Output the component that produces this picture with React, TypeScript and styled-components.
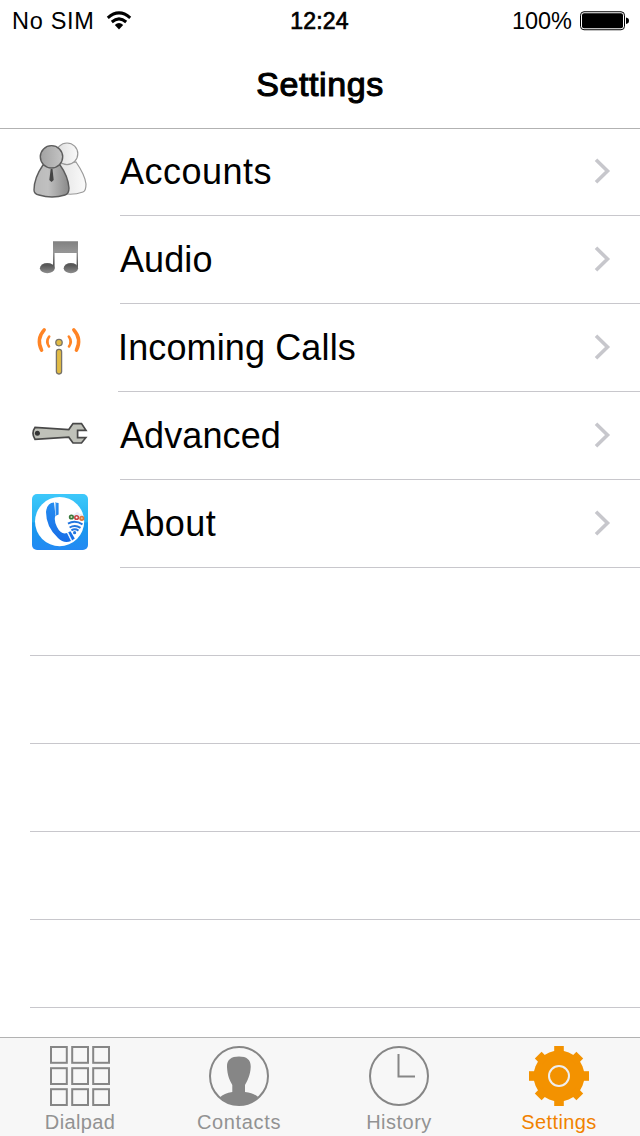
import React from 'react';
import styled, { createGlobalStyle } from 'styled-components';

const GlobalStyle = createGlobalStyle`
  * { box-sizing: border-box; }
  body { margin: 0; background: #fff; }
`;

const Screen = styled.div`
  width: 640px;
  height: 1136px;
  display: flex;
  flex-direction: column;
  overflow: hidden;
  background: #fff;
  color: #000;
  font-family: 'Liberation Sans', Arial, sans-serif;
  svg { display: block; flex: none; }
`;

const Header = styled.header`
  height: 129px;
  flex: none;
  border-bottom: 1px solid #b2b2b2;
`;

const StatusBar = styled.div`
  height: 40px;
  display: grid;
  grid-template-columns: 1fr auto 1fr;
  align-items: center;
  padding: 1px 12px 0 12px;
  font-size: 24px;
  line-height: 40px;
`;

const StatusSide = styled.div<{ $end?: boolean }>`
  display: flex;
  align-items: center;
  justify-content: ${p => (p.$end ? 'flex-end' : 'flex-start')};
  gap: ${p => (p.$end ? 8 : 11)}px;
  margin-right: ${p => (p.$end ? -1 : 0)}px;
`;

const StatusText = styled.span<{ $spacing: number }>`
  letter-spacing: ${p => p.$spacing}px;
  font-size: 23.5px;
`;

const Clock = styled.time`
  font-size: 23px;
  letter-spacing: 0.2px;
  margin-right: 1px;
  -webkit-text-stroke: 0.7px #000;
`;

const Title = styled.h1`
  margin: 0;
  height: 88px;
  line-height: 89px;
  text-align: center;
  font-size: 34px;
  font-weight: 400;
  letter-spacing: 0.6px;
  -webkit-text-stroke: 1.1px #000;
`;

const List = styled.main`
  flex: 1;
  min-height: 0;
  margin-top: -1px;
  overflow: hidden;
`;

const Row = styled.div`
  height: 88px;
  display: flex;
  padding-left: 32px;
`;

const IconSlot = styled.div<{ $width: number }>`
  width: ${p => p.$width}px;
  flex: none;
  padding-top: 14px;
`;

const RowBody = styled.div`
  flex: 1;
  display: flex;
  align-items: center;
  justify-content: space-between;
  padding-right: 29px;
  border-bottom: 1px solid #c8c7cc;
`;

const Label = styled.span<{ $spacing: number }>`
  font-size: 36px;
  line-height: 44px;
  letter-spacing: ${p => p.$spacing}px;
`;

const EmptyRow = styled.div`
  height: 88px;
  margin-left: 30px;
  border-bottom: 1px solid #c8c7cc;
`;

const TabBar = styled.nav`
  height: 99px;
  flex: none;
  display: grid;
  grid-template-columns: 160px 158px 162px 158px;
  background: #f7f7f7;
  border-top: 1px solid #b2b2b2;
`;

const Tab = styled.div<{ $active?: boolean }>`
  display: flex;
  flex-direction: column;
  align-items: center;
  padding-top: 8px;
  color: ${p => (p.$active ? '#f18200' : '#929292')};
`;

const TabLabel = styled.span<{ $spacing: number }>`
  margin-top: 4px;
  font-size: 20px;
  line-height: 24px;
  letter-spacing: ${p => p.$spacing}px;
`;

const Wifi = () => (
  <svg width="26" height="20" viewBox="0 0 26 20" fill="none" stroke="#000" strokeWidth="3">
    <path d="M1.8 6.8Q13 -3 24.2 6.8" />
    <path d="M5.8 11Q13 4.8 20.2 11" />
    <path d="M8.8 14Q13 10 17.2 14L13 18.5Z" fill="#000" stroke="none" />
  </svg>
);

const Battery = () => (
  <svg width="49" height="20" viewBox="0 0 49 20">
    <rect x=".5" y=".75" width="44" height="18" rx="3.5" fill="#fff" stroke="#000" />
    <rect x="2" y="2.2" width="41" height="15" rx="2" />
    <path d="M46 6.5Q49 7 49 9.8T46 13Z" />
  </svg>
);

const Chevron = () => (
  <svg width="17" height="28" viewBox="0 0 17 28" fill="none" stroke="#c7c7cc" strokeWidth="3.6">
    <path d="M2 1.8L13.5 13L2 24.2" />
  </svg>
);

const AccountsIcon = () => (
  <svg width="56" height="56" viewBox="0 0 56 56">
    <defs>
      <linearGradient id="front"><stop stopColor="#b9b9b9" /><stop offset=".4" stopColor="#c0c0c0" /><stop offset="1" stopColor="#898989" /></linearGradient>
      <linearGradient id="head"><stop stopColor="#a2a2a2" /><stop offset="1" stopColor="#c4c4c4" /></linearGradient>
      <linearGradient id="back"><stop stopColor="#dedede" /><stop offset="1" stopColor="#fafafa" /></linearGradient>
    </defs>
    <g fill="url(#back)" stroke="#999" strokeWidth="1.2">
      <path d="M27 22Q18 35 22 49Q37 55 51 50Q54 49 54 42Q53 33 44 20Z" />
      <circle cx="35" cy="11.8" r="10.8" />
    </g>
    <path d="M11 23Q2 36 2 48Q2 52 7 53Q20 57 33 53Q37 52 37 46Q36 34 28 23Z" fill="url(#front)" stroke="#5c5c5c" strokeWidth="1.4" />
    <circle cx="19.5" cy="14.8" r="11.2" fill="url(#head)" stroke="#5c5c5c" strokeWidth="1.4" />
    <path d="M18.7 27H20.5L21.7 38L19.5 40L17.3 38Z" fill="#444" />
  </svg>
);

const AudioIcon = () => (
  <svg width="56" height="56" viewBox="0 0 56 56">
    <defs>
      <linearGradient id="note" x1="0" y1="11" x2="0" y2="43" gradientUnits="userSpaceOnUse"><stop stopColor="#808080" /><stop offset=".35" stopColor="#969696" /><stop offset=".55" stopColor="#777" /><stop offset=".75" stopColor="#565656" /><stop offset="1" stopColor="#8c8c8c" /></linearGradient>
    </defs>
    <g fill="url(#note)">
      <path d="M21 11.3H46V38H44.6V23H22.6V38H21Z" />
      <ellipse cx="15.3" cy="38.2" rx="7.4" ry="5.1" />
      <ellipse cx="38.9" cy="38.2" rx="7.2" ry="5.1" />
    </g>
  </svg>
);

const IncomingIcon = () => (
  <svg width="56" height="58" viewBox="0 0 56 58" fill="none">
    <g stroke="#ff8425" strokeLinecap="round" strokeWidth="3.5">
      <path d="M12.2 11.8Q4 21 9.6 32.2M41.8 11.8Q50 21 44.4 32.2" />
      <path d="M17.2 18.5Q13.5 23.5 17 28.5M36.8 18.5Q40.5 23.5 37 28.5" strokeWidth="2.6" />
    </g>
    <g fill="#e1bb45" stroke="#777268" strokeWidth="1.3">
      <circle cx="27" cy="24.6" r="3.2" />
      <rect x="24.4" y="31.4" width="5.2" height="24.6" rx="2.4" />
    </g>
  </svg>
);

const WrenchIcon = () => (
  <svg width="56" height="56" viewBox="0 -2 56 56">
    <path d="M3 19.4Q-1 25 3 31.3L36.8 29.2L41 35H49.5L53.8 29.7H45.6V22.4H54L49.5 15.6H41L36.8 21.5Z" fill="#bfc1b9" stroke="#484848" strokeWidth="1.7" />
    <circle cx="5.4" cy="25.2" r="2.5" fill="#353535" />
  </svg>
);

const AboutIcon = () => (
  <svg width="56" height="56" viewBox="0 0 56 56">
    <defs>
      <linearGradient id="app" x2="0" y2="1"><stop stopColor="#3dc8fa" /><stop offset=".49" stopColor="#27b1f2" /><stop offset=".52" stopColor="#169bed" /><stop offset="1" stopColor="#2389f3" /></linearGradient>
      <linearGradient id="phone" x2="0" y2="1"><stop stopColor="#258cf0" /><stop offset="1" stopColor="#176de7" /></linearGradient>
    </defs>
    <rect width="56" height="56" rx="5" fill="url(#app)" />
    <circle cx="27.6" cy="27.6" r="24.6" fill="#fff" />
    <path d="M22 8.6Q15 9 14 18Q14 33 26 44Q32 50 39 47L35 39Q29 41 25 33Q21.5 26 23.5 21.5Z" fill="url(#phone)" />
    <path d="M23 8.6L26.6 9V20.5L23.2 22ZM36.2 38.3L38.5 37.3L42.8 44.5L40 46.5Z" fill="url(#phone)" />
    <path d="M23.6 9V21.5M35.7 38.6L40 46.8" stroke="#d9edff" strokeWidth=".7" />
    <g fill="none" stroke="#2376df" strokeWidth="2">
      <path d="M36 29.6Q43 25.8 50.5 30.3M37.6 33.5Q43 30.2 48.5 33.8" />
      <path d="M39.4 36.3Q43 34.2 46.5 36.6" />
    </g>
    <circle cx="42.6" cy="38.7" r="1.6" fill="#2376df" />
    <path d="M41 23Q40 20 43 20Q45 16 48 20Q52 20 51 23Z" fill="#e6edf8" />
    <g fill="none" strokeWidth="1.6">
      <circle cx="39.4" cy="23" r="1.8" fill="#caddb5" stroke="#39783b" />
      <circle cx="44.6" cy="23.5" r="1.8" fill="#fff" stroke="#c74444" />
      <circle cx="49.8" cy="24.3" r="1.8" fill="#f0bd91" stroke="#db763c" />
    </g>
  </svg>
);

const DialpadIcon = () => (
  <svg width="60" height="60" viewBox="0 0 60 60" fill="none" stroke="#868686" strokeWidth="2">
    {[1, 22.2, 43.2].map(y => [1, 22.2, 43.2].map(x => <rect key={`${x}-${y}`} x={x} y={y} width="15.8" height="15.8" />))}
  </svg>
);

const ContactsIcon = () => (
  <svg width="60" height="60" viewBox="0 0 60 60">
    <circle cx="30" cy="30" r="29" fill="none" stroke="#868686" strokeWidth="2" />
    <path d="M30 10.6C38 10.6 42 14 41.7 21C41.4 29 38.5 34.5 36 39V46C42 46.5 46.2 48.5 49.2 51Q41 59 30 59T10.8 51.5Q15 47 23.3 46V39C20.5 34 18.3 29 18 21C17.7 14 22 10.6 30 10.6Z" fill="#868686" />
  </svg>
);

const HistoryIcon = () => (
  <svg width="60" height="60" viewBox="0 0 60 60" fill="none" stroke="#868686" strokeWidth="2">
    <circle cx="30" cy="30" r="29" />
    <path d="M29.5 8V30.5H46" />
  </svg>
);

const GearIcon = () => (
  <svg width="60" height="60" viewBox="0 0 60 60">
    <g fill="#f39200">
      <circle cx="30" cy="30" r="25.4" />
      {[0, 45, 90, 135, 180, 225, 270, 315].map(a => (
        <rect key={a} x="25.2" y={a % 90 ? 0.6 : 0} width="9.6" height="9" transform={`rotate(${a} 30 30)`} />
      ))}
    </g>
    <circle cx="30" cy="30" r="10" fill="none" stroke="#eee" strokeWidth="2" />
  </svg>
);

const items = [
  { label: 'Accounts', Icon: AccountsIcon, slot: 88, spacing: 0.5 },
  { label: 'Audio', Icon: AudioIcon, slot: 88, spacing: 0.1 },
  { label: 'Incoming Calls', Icon: IncomingIcon, slot: 86, spacing: 0.13 },
  { label: 'Advanced', Icon: WrenchIcon, slot: 88, spacing: 0.1 },
  { label: 'About', Icon: AboutIcon, slot: 88, spacing: 0.4 },
];

const tabs = [
  { label: 'Dialpad', Icon: DialpadIcon, spacing: 0.35 },
  { label: 'Contacts', Icon: ContactsIcon, spacing: 0.65 },
  { label: 'History', Icon: HistoryIcon, spacing: 0.5 },
  { label: 'Settings', Icon: GearIcon, spacing: 0.4, active: true },
];

export default function App() {
  return (
    <>
      <GlobalStyle />
      <Screen>
        <Header>
          <StatusBar>
            <StatusSide><StatusText $spacing={0.7}>No SIM</StatusText><Wifi /></StatusSide>
            <Clock>12:24</Clock>
            <StatusSide $end><StatusText $spacing={0}>100%</StatusText><Battery /></StatusSide>
          </StatusBar>
          <Title>Settings</Title>
        </Header>
        <List>
          {items.map(({ label, Icon, slot, spacing }) => (
            <Row key={label}>
              <IconSlot $width={slot}><Icon /></IconSlot>
              <RowBody><Label $spacing={spacing}>{label}</Label><Chevron /></RowBody>
            </Row>
          ))}
          {[0, 1, 2, 3, 4].map(n => <EmptyRow key={n} />)}
        </List>
        <TabBar>
          {tabs.map(({ label, Icon, spacing, active }) => (
            <Tab key={label} $active={active}><Icon /><TabLabel $spacing={spacing}>{label}</TabLabel></Tab>
          ))}
        </TabBar>
      </Screen>
    </>
  );
}
